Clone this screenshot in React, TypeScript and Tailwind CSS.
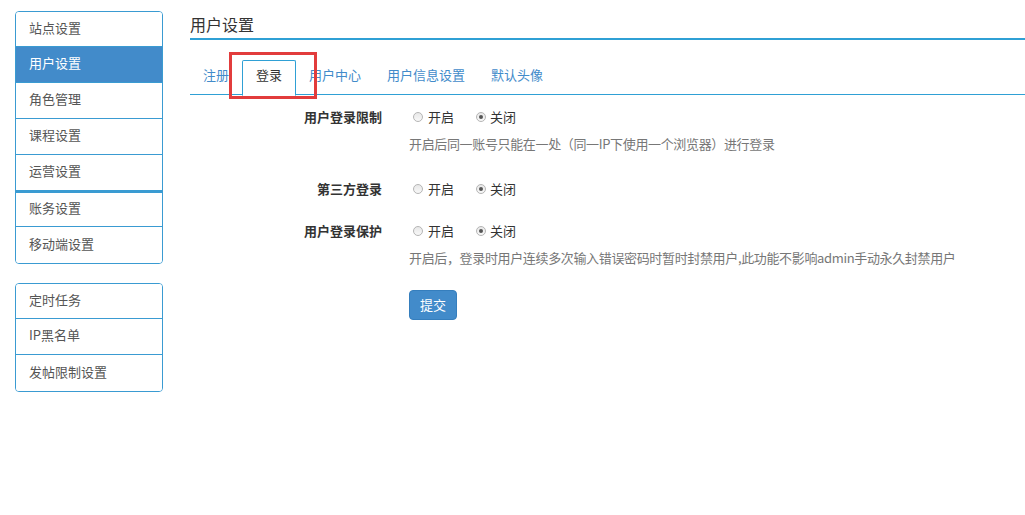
import React from "react";

const font = { fontFamily: '"Noto Sans CJK SC", "Noto Sans", sans-serif' };

const groupA = ["站点设置", "用户设置", "角色管理", "课程设置", "运营设置", "账务设置", "移动端设置"];
const groupB = ["定时任务", "IP黑名单", "发帖限制设置"];

function SideGroup({ items, active }: { items: string[]; active?: string }) {
  return (
    <ul className="border border-[#3a9bd2] rounded-[4px] overflow-hidden divide-y divide-[#3a9bd2]">
      {items.map((t) => (
        <li
          key={t}
          className={
            "h-[36px] first:h-[35px] flex items-center pl-[13px] pb-[3px] text-[13px] " +
            (t === active ? "bg-[#428bca] text-white" : "text-[#555] bg-white") +
            (t === "账务设置" ? " border-t-2" : "")
          }
        >
          {t}
        </li>
      ))}
    </ul>
  );
}

function Radio({ checked }: { checked?: boolean }) {
  return (
    <span className="w-[10px] h-[10px] rounded-full border border-[#b5b5b5] bg-gradient-to-b from-[#e8e8e8] to-[#f8f8f8] flex items-center justify-center">
      {checked && <span className="w-[4px] h-[4px] rounded-full bg-[#555]" />}
    </span>
  );
}

function Radios() {
  return (
    <div className="flex items-center ml-[4px] text-[13px] text-[#333]">
      <Radio />
      <span className="ml-[5px]">开启</span>
      <span className="ml-[22px]" />
      <Radio checked />
      <span className="ml-[4px]">关闭</span>
    </div>
  );
}

function Row({ label, children }: { label: string; children: React.ReactNode }) {
  return (
    <div className="flex items-center h-[20px]">
      <div className="w-[192px] text-right text-[13px] font-bold text-[#333]">{label}</div>
      <div className="pl-[27px]">{children}</div>
    </div>
  );
}

function Help({ text }: { text: string }) {
  return (
    <div className="ml-[219px] h-[20px] leading-[20px] text-[13px] text-[#777] tracking-[-0.35px] whitespace-nowrap">
      {text}
    </div>
  );
}

export default function App() {
  const tabs = ["注册", "登录", "用户中心", "用户信息设置", "默认头像"];
  return (
    <div className="flex pl-[15px] pt-[11px] bg-white min-h-[515px] overflow-hidden" style={font}>
      <aside className="w-[148px] shrink-0">
        <SideGroup items={groupA} active="用户设置" />
        <div className="mt-[19px]">
          <SideGroup items={groupB} />
        </div>
      </aside>

      <main className="flex-1 ml-[27px]">
        {/* 标题 */}
        <div className="mt-[1px] pb-[2px] border-b-2 border-[#2fa0d5] text-[16px] leading-[24px] text-[#333]">用户设置</div>

        {/* 标签页 */}
        <div className="relative mt-[20px]">
          <ul className="flex border-b border-[#2fa0d5] h-[35px]">
            {tabs.map((t) => (
              <li
                key={t}
                className={
                  "h-[36px] flex items-center pb-[6px] text-[13px] border rounded-t-[2px] " +
                  (t === "登录"
                    ? "px-[13px] border-[#2fa0d5] border-b-white bg-white text-[#333]"
                    : "px-[12px] border-transparent text-[#428bca]")
                }
              >
                {t}
              </li>
            ))}
          </ul>
          <div className="absolute left-[39px] top-[-8px] w-[88px] h-[47px] border-[3px] border-[#e23c3c]" />
        </div>

        {/* 表单 */}
        <div className="mt-[12px]">
          <Row label="用户登录限制">
            <Radios />
          </Row>
          <div className="mt-[7px]">
            <Help text="开启后同一账号只能在一处（同一IP下使用一个浏览器）进行登录" />
          </div>
          <div className="mt-[25px]">
            <Row label="第三方登录">
              <Radios />
            </Row>
          </div>
          <div className="mt-[22px]">
            <Row label="用户登录保护">
              <Radios />
            </Row>
          </div>
          <div className="mt-[7px]">
            <Help text="开启后，登录时用户连续多次输入错误密码时暂时封禁用户,此功能不影响admin手动永久封禁用户" />
          </div>
          <div className="mt-[22px] ml-[219px]">
            <button className="w-[48px] h-[30px] rounded-[4px] bg-[#428bca] border border-[#357ebd] text-white text-[13px]">
              提交
            </button>
          </div>
        </div>
      </main>
    </div>
  );
}
